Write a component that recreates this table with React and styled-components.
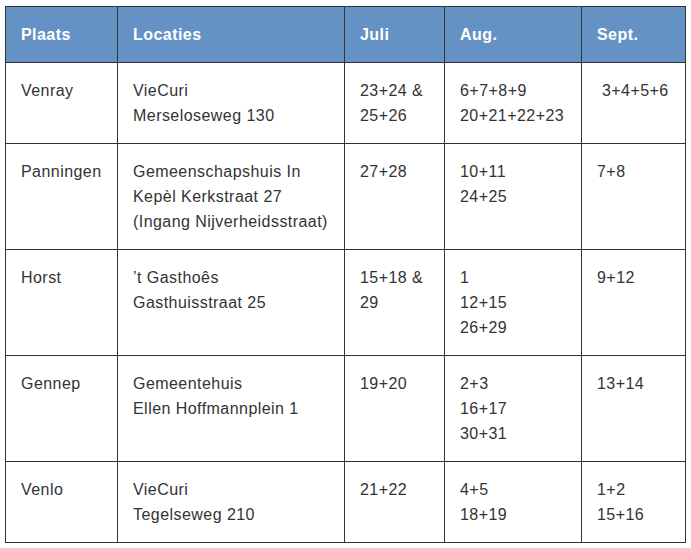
import { createGlobalStyle } from 'styled-components';
import styled from 'styled-components';

const GlobalStyle = createGlobalStyle`
  body {
    margin: 0;
    background: #fff;
    font-family: "Liberation Sans", Arial, Helvetica, sans-serif;
  }
`;

const Page = styled.div`
  padding: 6px 0 0 5px;
`;

const Table = styled.table`
  border-collapse: collapse;
  table-layout: fixed;
  width: 680px;
  border: 1px solid #333;
  font-size: 16px;
  line-height: 25px;
  letter-spacing: 0.45px;
  color: #333;
`;

const Col = styled.col`
  width: ${(p) => p.$w}px;
`;

const HeadCell = styled.th`
  background: #6592c5;
  color: #fff;
  font-weight: bold;
  text-align: left;
  vertical-align: top;
  padding: 15px 15px;
  border: 1px solid #333;
`;

const Cell = styled.td`
  vertical-align: top;
  padding: 15px 15px;
  border: 1px solid #333;
`;

const widths = [112, 227, 100, 137, 104];
const headers = ['Plaats', 'Locaties', 'Juli', 'Aug.', 'Sept.'];

const rows = [
  ['Venray', ['VieCuri', 'Merseloseweg 130'], ['23+24 & 25+26'], ['6+7+8+9', '20+21+22+23'], ['\u00a03+4+5+6']],
  ['Panningen', ['Gemeenschapshuis In Kepèl Kerkstraat 27 (Ingang Nijverheidsstraat)'], ['27+28'], ['10+11', '24+25'], ['7+8']],
  ['Horst', ['\u2019t Gasthoês', 'Gasthuisstraat 25'], ['15+18 & 29'], ['1', '12+15', '26+29'], ['9+12']],
  ['Gennep', ['Gemeentehuis', 'Ellen Hoffmannplein 1'], ['19+20'], ['2+3', '16+17', '30+31'], ['13+14']],
  ['Venlo', ['VieCuri', 'Tegelseweg 210'], ['21+22'], ['4+5', '18+19'], ['1+2', '15+16']],
];

function Lines({ items }) {
  return items.map((t, i) => (
    <span key={i}>
      {i > 0 && <br />}
      {t}
    </span>
  ));
}

export default function App() {
  return (
    <Page>
      <GlobalStyle />
      <Table>
        <colgroup>
          {widths.map((w, i) => <Col key={i} $w={w} />)}
        </colgroup>
        <thead>
          <tr>
            {headers.map((h) => <HeadCell key={h}>{h}</HeadCell>)}
          </tr>
        </thead>
        <tbody>
          {rows.map(([place, ...rest]) => (
            <tr key={place}>
              <Cell>{place}</Cell>
              {rest.map((items, i) => (
                <Cell key={i}><Lines items={items} /></Cell>
              ))}
            </tr>
          ))}
        </tbody>
      </Table>
    </Page>
  );
}
